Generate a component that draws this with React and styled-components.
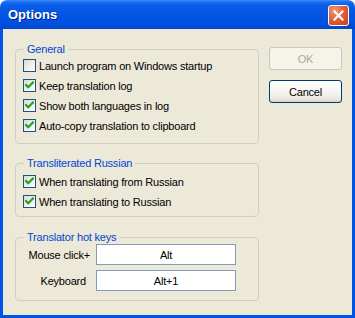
import React from "react";
import styled, { createGlobalStyle } from "styled-components";

const GlobalStyle = createGlobalStyle`
  html, body { margin: 0; padding: 0; background: #ffffff; }
  * { box-sizing: border-box; }
`;

const Window = styled.div`
  width: 355px;
  height: 318px;
  display: flex;
  flex-direction: column;
  font-family: "Liberation Sans", Arial, sans-serif;
  font-size: 11px;
  letter-spacing: -0.2px;
  color: #000;
`;

const TitleBar = styled.div`
  height: 29px;
  flex: 0 0 29px;
  display: flex;
  align-items: flex-start;
  padding-left: 8px;
  border-radius: 7px 7px 0 0;
  background: linear-gradient(
    to bottom,
    #3d8ef8 0px,
    #1c6ef2 2px,
    #0a5ee8 5px,
    #0456e4 12px,
    #0054e3 20px,
    #004ddc 25px,
    #0044cc 29px
  );
`;

const Title = styled.span`
  margin-top: 7px;
  color: #fff;
  font-weight: bold;
  font-size: 13px;
  letter-spacing: 0;
  line-height: 16px;
  text-shadow: 1px 1px 0 #0a1c8a;
`;

const CloseButton = styled.div`
  margin-left: auto;
  margin-right: 6px;
  margin-top: 5px;
  width: 21px;
  height: 21px;
  border: 1px solid #fff;
  border-radius: 3px;
  background: radial-gradient(circle at 30% 25%, #ee9b7c 0%, #e0603a 45%, #c8401c 100%);
  display: flex;
  align-items: center;
  justify-content: center;
`;

const Client = styled.div`
  flex: 1;
  display: flex;
  align-items: flex-start;
  background: #ece9d8;
  border: 3px solid #0055e5;
  border-top: none;
  padding: 14px 0 0 12px;
`;

const LeftColumn = styled.div`
  width: 244px;
  display: flex;
  flex-direction: column;
`;

const RightColumn = styled.div`
  margin-left: 10px;
  margin-top: 4px;
  display: flex;
  flex-direction: column;
  gap: 10px;
`;

const Group = styled.fieldset`
  margin: ${(p) => p.$mt || 0}px 0 0 0;
  border: 1px solid #d0d0bf;
  border-radius: 4px;
  padding: ${(p) => p.$pt || 0}px 6px ${(p) => p.$pb || 0}px 7px;
  min-width: 0;
  display: flex;
  flex-direction: column;
`;

const Legend = styled.legend`
  margin-left: 1px;
  padding: 0 3px;
  line-height: 13px;
  color: #0046d5;
`;

const CheckRow = styled.label`
  height: 19px;
  display: flex;
  align-items: center;
  gap: 3px;
  margin-bottom: ${(p) => (p.$last ? 0 : 1)}px;
  white-space: nowrap;
`;

const Box = styled.span`
  width: 13px;
  height: 13px;
  flex: 0 0 13px;
  border: 1px solid #1c5180;
  background: linear-gradient(135deg, #dcdcd7 0%, #f0f0ea 55%, #ffffff 100%);
  display: flex;
  align-items: center;
  justify-content: center;
`;

const FieldRow = styled.div`
  display: flex;
  align-items: center;
  margin-bottom: ${(p) => (p.$last ? 0 : 5)}px;
`;

const FieldLabel = styled.span`
  width: 73px;
  text-align: right;
  padding-right: ${(p) => p.$pr}px;
  white-space: nowrap;
`;

const Field = styled.div`
  width: 140px;
  height: 21px;
  border: 1px solid #7f9db9;
  background: #fff;
  display: flex;
  align-items: center;
  justify-content: center;
`;

const Button = styled.div`
  width: 73px;
  height: 23px;
  border-radius: 3px;
  display: flex;
  align-items: center;
  justify-content: center;
  border: 1px solid ${(p) => (p.$disabled ? "#c9c7ba" : "#003c74")};
  color: ${(p) => (p.$disabled ? "#aca899" : "#000")};
  background: ${(p) =>
    p.$disabled
      ? "#f5f4ea"
      : "linear-gradient(to bottom, #ffffff 0%, #f6f5f1 50%, #ebe9e0 85%, #d6d0c5 100%)"};
`;

const Check = () => (
  <svg width="9" height="9" viewBox="0 0 9 9">
    <polyline
      points="1,4 3.2,6.3 8,1.5"
      fill="none"
      stroke="#21a121"
      strokeWidth="2.2"
      strokeLinecap="square"
    />
  </svg>
);

const CheckItem = ({ checked, children, last }) => (
  <CheckRow $last={last}>
    <Box>{checked && <Check />}</Box>
    <span>{children}</span>
  </CheckRow>
);

export default function App() {
  return (
    <>
      <GlobalStyle />
      <Window>
        <TitleBar>
          <Title>Options</Title>
          <CloseButton>
            <svg width="11" height="11" viewBox="0 0 11 11">
              <path d="M1.5 1.5 L9.5 9.5 M9.5 1.5 L1.5 9.5" stroke="#fff" strokeWidth="2.2" strokeLinecap="square" />
            </svg>
          </CloseButton>
        </TitleBar>
        <Client>
          <LeftColumn>
            <Group $pt={0} $pb={8}>
              <Legend>General</Legend>
              <CheckItem>Launch program on Windows startup</CheckItem>
              <CheckItem checked>Keep translation log</CheckItem>
              <CheckItem checked>Show both languages in log</CheckItem>
              <CheckItem checked last>Auto-copy translation to clipboard</CheckItem>
            </Group>
            <Group $mt={13} $pt={2} $pb={5}>
              <Legend>Transliterated Russian</Legend>
              <CheckItem checked>When translating from Russian</CheckItem>
              <CheckItem checked last>When translating to Russian</CheckItem>
            </Group>
            <Group $mt={14} $pt={0} $pb={9}>
              <Legend>Translator hot keys</Legend>
              <FieldRow>
                <FieldLabel $pr={6}>Mouse click+</FieldLabel>
                <Field>Alt</Field>
              </FieldRow>
              <FieldRow $last>
                <FieldLabel $pr={10}>Keyboard</FieldLabel>
                <Field>Alt+1</Field>
              </FieldRow>
            </Group>
          </LeftColumn>
          <RightColumn>
            <Button $disabled>OK</Button>
            <Button>Cancel</Button>
          </RightColumn>
        </Client>
      </Window>
    </>
  );
}
